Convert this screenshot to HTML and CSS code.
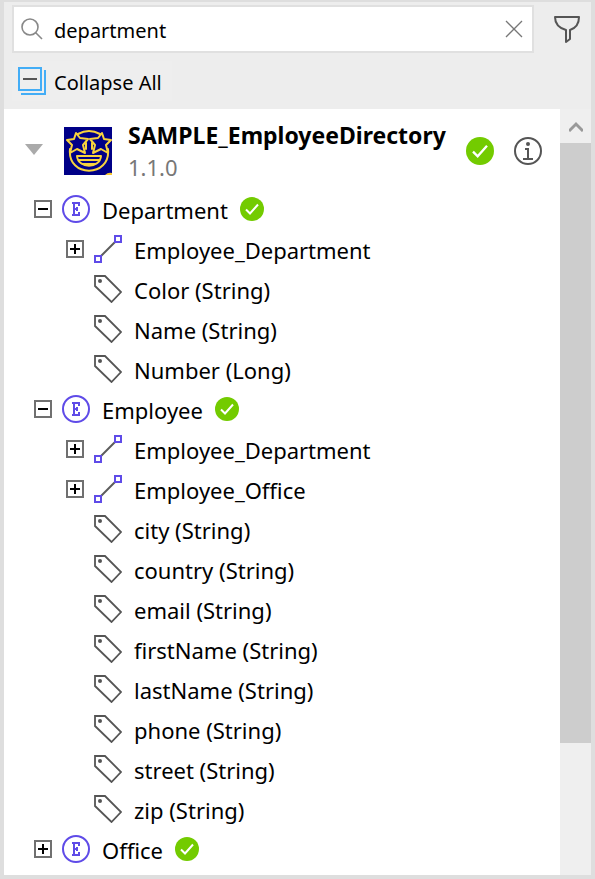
FILE: index.html
```
<!DOCTYPE html>
<html lang="en">
<head>
<meta charset="utf-8">
<meta name="viewport" content="width=device-width, initial-scale=1">
<title>Employee Directory</title>
<link rel="stylesheet" href="styles.css">
</head>
<body>
<svg class="defs" aria-hidden="true">
  <symbol id="minus" viewBox="0 0 18 18"><path d="M1 1h16v16H1z" fill="#fff" stroke="#707070" stroke-width="2"/><path d="M4 9h10" stroke="#000" stroke-width="2"/></symbol>
  <symbol id="plus" viewBox="0 0 18 18"><path d="M1 1h16v16H1z" fill="#fff" stroke="#707070" stroke-width="2"/><path d="M4 9h10M9 4v10" stroke="#000" stroke-width="2"/></symbol>
  <symbol id="entity" viewBox="0 0 28 28"><g fill="none" stroke="#5f4be8"><circle cx="14" cy="14" r="13" stroke-width="2"/><path d="M10 8h7v3M10 20h7v-3M12 8v12M12 14h4M15 12v4" stroke-width="2"/></g></symbol>
  <symbol id="relation" viewBox="0 0 28 28"><path d="M7 21L21 7" stroke="#5c5c5c" stroke-width="2"/><path d="M1 21h6v6H1zM21 1h6v6h-6z" fill="#fff" stroke="#5f4be8" stroke-width="2"/></symbol>
  <symbol id="tag" viewBox="0 0 28 28"><path d="M1 1h10l16 16-9.500 10L1 11z" fill="none" stroke="#555" stroke-width="1.800"/><circle cx="6" cy="6" r="2" fill="#555"/></symbol>
  <symbol id="check" viewBox="0 0 24 24"><circle cx="12" cy="12" r="12" fill="#73cb00"/><path d="M6 12.500l4 4 8-9" fill="none" stroke="#fff" stroke-width="2"/></symbol>
</svg>
<main class="panel">
  <header class="toolbar">
    <div class="search-row">
      <div class="search">
        <label for="query" aria-label="Search"><svg class="search-icon" viewBox="0 0 22 22"><g fill="none" stroke="#888" stroke-width="1.600"><circle cx="9" cy="9" r="8"/><path d="M14.500 14.500L21 21"/></g></svg></label>
        <input id="query" type="text" value="department">
        <button class="clear" aria-label="Clear"><svg viewBox="0 0 18 18"><path d="M1 1l16 16M17 1L1 17" stroke="#777" stroke-width="1.300"/></svg></button>
      </div>
      <button class="filter" aria-label="Filter"><svg viewBox="0 0 28 28"><path d="M2 2h24c0 7-3 11-9 13v9l-4 3V15C6 13 2 9 2 2z" fill="none" stroke="#555" stroke-width="2" stroke-linejoin="round"/></svg></button>
    </div>
    <button class="collapse"><svg viewBox="0 0 28 28"><g fill="none" stroke="#43adf6" stroke-width="2"><path d="M1 1h22v22H1z"/><path d="M27 3v24H3"/></g><path d="M5 12h14" stroke="#555" stroke-width="2"/></svg><span>Collapse All</span></button>
  </header>
  <div class="body">
    <section class="content">
      <div class="app">
        <button class="toggle" aria-label="Toggle module"><svg viewBox="0 0 18 11"><path d="M0 0h18L9 11z" fill="#aaa"/></svg></button>
        <svg class="logo" viewBox="0 0 48 48">
          <path d="M0 0h48v48H0z" fill="#000087"/>
          <g fill="none" stroke="#f8d33d" stroke-width="2" stroke-linejoin="round" stroke-linecap="round">
            <path d="M14 7Q25 1 36 7M6 22C3 51 47 51 44 22"/>
            <path d="M12 6l4 5 8 1-5 6 2 8-8-4-7 4 2-8-5-5 7-1z"/>
            <path d="M38 6l-4 5-8 1 5 6-2 8 8-4 7 4-2-8 5-5-7-1z"/>
            <path d="M22 16v6M28 16v6"/>
            <path d="M13 29h24c-1 13-23 13-24 0zM15 33h20M18 37h14"/>
          </g>
          <path d="M41 48q3-3 7-2v2z" fill="#f8c92f"/>
        </svg>
        <div class="app-text"><h1>SAMPLE_EmployeeDirectory</h1><p>1.1.0</p></div>
        <svg class="app-check" role="img" aria-label="Valid"><use href="#check"/></svg>
        <button class="info" aria-label="Information"><svg viewBox="0 0 28 28"><circle cx="14" cy="14" r="13" fill="none" stroke="#555" stroke-width="2"/><circle cx="14" cy="7" r="2" fill="#555"/><path d="M11 12h3v10M9 22h10" fill="none" stroke="#555" stroke-width="2"/></svg></button>
      </div>
      <ul class="tree">
        <li>
          <div class="row"><button class="expander" aria-label="Collapse"><svg><use href="#minus"/></svg></button><svg class="icon"><use href="#entity"/></svg><span>Department</span><svg class="badge"><use href="#check"/></svg></div>
          <ul>
            <li class="row"><button class="expander" aria-label="Expand"><svg><use href="#plus"/></svg></button><svg class="icon"><use href="#relation"/></svg><span>Employee_Department</span></li>
            <li class="row leaf"><svg class="icon"><use href="#tag"/></svg><span>Color (String)</span></li>
            <li class="row leaf"><svg class="icon"><use href="#tag"/></svg><span>Name (String)</span></li>
            <li class="row leaf"><svg class="icon"><use href="#tag"/></svg><span>Number (Long)</span></li>
          </ul>
        </li>
        <li>
          <div class="row"><button class="expander" aria-label="Collapse"><svg><use href="#minus"/></svg></button><svg class="icon"><use href="#entity"/></svg><span>Employee</span><svg class="badge"><use href="#check"/></svg></div>
          <ul>
            <li class="row"><button class="expander" aria-label="Expand"><svg><use href="#plus"/></svg></button><svg class="icon"><use href="#relation"/></svg><span>Employee_Department</span></li>
            <li class="row"><button class="expander" aria-label="Expand"><svg><use href="#plus"/></svg></button><svg class="icon"><use href="#relation"/></svg><span>Employee_Office</span></li>
            <li class="row leaf"><svg class="icon"><use href="#tag"/></svg><span>city (String)</span></li>
            <li class="row leaf"><svg class="icon"><use href="#tag"/></svg><span>country (String)</span></li>
            <li class="row leaf"><svg class="icon"><use href="#tag"/></svg><span>email (String)</span></li>
            <li class="row leaf"><svg class="icon"><use href="#tag"/></svg><span>firstName (String)</span></li>
            <li class="row leaf"><svg class="icon"><use href="#tag"/></svg><span>lastName (String)</span></li>
            <li class="row leaf"><svg class="icon"><use href="#tag"/></svg><span>phone (String)</span></li>
            <li class="row leaf"><svg class="icon"><use href="#tag"/></svg><span>street (String)</span></li>
            <li class="row leaf"><svg class="icon"><use href="#tag"/></svg><span>zip (String)</span></li>
          </ul>
        </li>
        <li>
          <div class="row"><button class="expander" aria-label="Expand"><svg><use href="#plus"/></svg></button><svg class="icon"><use href="#entity"/></svg><span>Office</span><svg class="badge"><use href="#check"/></svg></div>
        </li>
      </ul>
    </section>
    <div class="scrollbar">
      <button aria-label="Scroll up"><svg viewBox="0 0 14 11"><path d="M0 10l7-7 7 7" fill="none" stroke="#999" stroke-width="3"/></svg></button>
      <div class="track"><div class="thumb"></div></div>
    </div>
  </div>
</main>
</body>
</html>
```
FILE: styles.css
```
* { box-sizing: border-box; }
body { margin: 0; font-family: "Noto Sans", "Open Sans", sans-serif; font-size: 22px; line-height: 30px; color: #000; }
button { display: flex; align-items: center; flex: none; padding: 0; border: 0; background: none; color: inherit; font: inherit; }
svg { display: block; flex: none; }
ul { margin: 0; padding: 0; list-style: none; }
.defs { display: none; }
.panel { display: flex; flex-direction: column; min-height: 100vh; border: 4px solid #dedede; border-top-width: 2px; background: #fff; }
.toolbar { padding: 3px 0 8px 8px; background: #ededed; }
.search-row { display: flex; align-items: center; }
.search { display: flex; flex: 1; align-items: center; min-width: 0; height: 48px; padding: 0 9px 0 7px; border: 2px solid #e0e0e0; background: #fff; }
.search-icon { width: 22px; height: 22px; }
.search input { flex: 1; min-width: 0; margin-left: 11px; padding: 4px 0 0; border: 0; outline: 0; background: none; color: inherit; font: inherit; font-size: 20px; }
.clear svg { width: 18px; height: 18px; }
.filter { justify-content: center; width: 57px; padding-left: 8px; }
.filter svg { width: 28px; height: 28px; }
.collapse { gap: 8px; height: 40px; margin-top: 8px; padding: 0 10px 0 6px; font-size: 20px; background: #eee; }
.collapse span { padding-top: 4px; }
.collapse svg { width: 28px; height: 28px; }
.body { display: flex; flex: 1; }
.content { flex: 1; min-width: 0; padding-bottom: 6px; }
.app { display: flex; align-items: center; height: 80px; padding: 4px 18px 0 21px; }
.toggle { padding-bottom: 4px; }
.toggle svg { width: 18px; height: 11px; }
.logo { width: 48px; height: 48px; margin: 0 16px 0 21px; }
.app-text { flex: 1; min-width: 0; }
h1 { margin: 0; font-size: 23px; font-weight: 700; line-height: 32px; }
p { margin: 0; color: #777; line-height: 32px; }
.app-check { width: 28px; height: 28px; margin-right: 20px; }
.info svg { width: 28px; height: 28px; }
.row { display: flex; align-items: center; height: 40px; padding-left: 30px; }
.row span { padding-top: 2px; }
.tree ul .row { padding-left: 62px; }
.tree ul .leaf { padding-left: 90px; }
.expander { margin-right: 10px; }
.expander svg { width: 18px; height: 18px; }
.icon { width: 28px; height: 28px; margin-right: 12px; }
.badge { width: 24px; height: 24px; margin-left: 12px; }
.scrollbar { display: flex; flex-direction: column; flex: none; width: 31px; background: #efefef; }
.scrollbar button { justify-content: center; height: 34px; }
.scrollbar svg { width: 14px; height: 11px; }
.track { flex: 1; }
.thumb { height: 82%; background: #cdcdcd; }
```
